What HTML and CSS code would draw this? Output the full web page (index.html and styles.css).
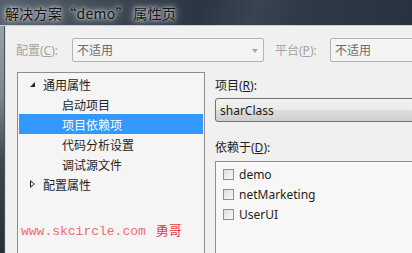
FILE: index.html
```html
<!DOCTYPE html>
<html lang="zh-CN">
<head>
    <meta charset="UTF-8">
    <title>解决方案“demo” 属性页</title>
    <link rel="stylesheet" href="styles.css">
</head>
<body>
    <div class="window">
        <div class="titlebar">
            <span class="title">解决方案“demo” 属性页</span>
        </div>
        <div class="frame">
            <div class="frame-edge"></div>
            <div class="dialog">
                <div class="config-row">
                    <span class="label disabled">配置(<u>C</u>):</span>
                    <div class="combo combo-disabled combo-config">
                        <span>不适用</span>
                        <span class="arrow"></span>
                    </div>
                    <span class="label disabled label-platform">平台(<u>P</u>):</span>
                    <div class="combo combo-disabled combo-platform">
                        <span>不适用</span>
                    </div>
                </div>
                <div class="main">
                    <div class="tree">
                        <div class="tree-item">
                            <span class="toggle expanded"></span>
                            <span>通用属性</span>
                        </div>
                        <div class="tree-item child">启动项目</div>
                        <div class="tree-item child selected">项目依赖项</div>
                        <div class="tree-item child">代码分析设置</div>
                        <div class="tree-item child">调试源文件</div>
                        <div class="tree-item">
                            <span class="toggle collapsed"></span>
                            <span>配置属性</span>
                        </div>
                        <div class="watermark">www.skcircle.com <span class="wm-name">勇哥</span></div>
                    </div>
                    <div class="panel">
                        <div class="field-label">项目(<u>R</u>):</div>
                        <div class="combo combo-project">sharClass</div>
                        <div class="field-label depends">依赖于(<u>D</u>):</div>
                        <div class="listbox">
                            <div class="check-row"><span class="checkbox"></span>demo</div>
                            <div class="check-row"><span class="checkbox"></span>netMarketing</div>
                            <div class="check-row"><span class="checkbox"></span>UserUI</div>
                        </div>
                    </div>
                </div>
            </div>
        </div>
    </div>
</body>
</html>
```

FILE: styles.css
```css
body {
    margin: 0;
    width: 412px;
    height: 253px;
    overflow: hidden;
    background-color: #2a3440;
    font-family: "Noto Sans", "Noto Sans CJK SC", sans-serif;
    font-size: 12px;
    color: #1e1e1e;
}
.window {
    display: flex;
    flex-direction: column;
    height: 253px;
}
.titlebar {
    height: 25px;
    flex-shrink: 0;
    display: flex;
    align-items: center;
    padding-left: 5px;
    background: linear-gradient(100deg, #56606b 0%, #3a4552 30%, #2b3643 48%, #3a4450 62%, #2f3a46 72%, #283340 100%);
    border-bottom: 1px solid #c9cfd5;
}
.title {
    font-family: "Noto Sans CJK SC", sans-serif;
    font-size: 14px;
    letter-spacing: 0.3px;
    color: #141414;
    text-shadow: 0 0 6px #c4c9ce, 0 0 10px #b8bec4, 0 0 3px #d0d4d8;
}
.frame {
    flex: 1;
    display: flex;
    min-height: 0;
}
.frame-edge {
    width: 4px;
    flex-shrink: 0;
    background: linear-gradient(180deg, #97a1ab 0%, #7b8691 30%, #3b4652 60%, #252e38 100%);
    border-right: 1px solid #4b5560;
}
.dialog {
    flex: 1;
    background-color: #f0f0f0;
    border-left: 1px solid #dcdcdc;
    padding: 12px 0 0 10px;
    overflow: hidden;
}
.config-row {
    display: flex;
    align-items: center;
    height: 24px;
    white-space: nowrap;
}
.label {
    width: 56px;
    flex-shrink: 0;
}
.label-platform {
    margin-left: 11px;
    width: 55px;
}
.disabled {
    color: #a3a3a3;
}
.combo {
    box-sizing: border-box;
    height: 24px;
    display: flex;
    align-items: center;
    padding-left: 4px;
    flex-shrink: 0;
    position: relative;
}
.combo-disabled {
    background-color: #f4f4f4;
    border: 1px solid #b4b4b4;
    border-radius: 2px;
    color: #6a6a6a;
}
.combo-config {
    width: 192px;
}
.combo-platform {
    width: 120px;
}
.arrow {
    position: absolute;
    right: 5px;
    top: 10px;
    border-left: 3px solid transparent;
    border-right: 3px solid transparent;
    border-top: 4px solid #a6a6a6;
}
.main {
    display: flex;
    margin-top: 10px;
    margin-left: 1px;
}
.tree {
    width: 184px;
    height: 200px;
    flex-shrink: 0;
    background-color: #f5f5f5;
    border: 1px solid #8e8e8e;
    padding: 1px 1px 0 1px;
    font-family: "Noto Sans CJK SC", sans-serif;
}
.tree-item {
    height: 20px;
    display: flex;
    align-items: center;
    padding-left: 24px;
    white-space: nowrap;
}
.tree-item.child {
    padding-left: 43px;
}
.tree-item.selected {
    background-color: #3399ff;
    color: #ffffff;
}
.toggle {
    width: 10px;
    height: 10px;
    margin-left: -14px;
    margin-right: 4px;
    position: relative;
}
.toggle.expanded::before {
    content: "";
    position: absolute;
    left: 1px;
    top: 3px;
    border-left: 5px solid transparent;
    border-bottom: 5px solid #262626;
}
.toggle.collapsed::before {
    content: "";
    position: absolute;
    left: 1px;
    top: 1px;
    border-top: 4px solid transparent;
    border-bottom: 4px solid transparent;
    border-left: 5px solid #262626;
}
.toggle.collapsed::after {
    content: "";
    position: absolute;
    left: 2px;
    top: 3px;
    border-top: 2px solid transparent;
    border-bottom: 2px solid transparent;
    border-left: 3px solid #f5f5f5;
}
.watermark {
    margin-top: 26px;
    padding-left: 2px;
    font-family: "Liberation Mono", monospace;
    font-size: 13px;
    color: #f06d6d;
    white-space: nowrap;
}
.wm-name {
    font-family: "Noto Sans CJK SC", sans-serif;
    font-size: 13px;
    color: #e83838;
    margin-left: 2px;
}
.panel {
    margin-left: 10px;
    width: 260px;
    flex-shrink: 0;
    display: flex;
    flex-direction: column;
}
.field-label {
    height: 20px;
    display: flex;
    align-items: center;
    margin-top: 3px;
}
.combo-project {
    margin-top: 3px;
    border: 1px solid #707070;
    border-radius: 3px;
    background: linear-gradient(180deg, #f2f2f2 0%, #ebebeb 50%, #dddddd 51%, #cfcfcf 100%);
    font-size: 12px;
    color: #1a1a1a;
}
.depends {
    margin-top: 15px;
}
.listbox {
    margin-top: 4px;
    height: 120px;
    background-color: #f7f7f7;
    border: 1px solid #8e8e8e;
    padding-top: 2px;
}
.check-row {
    height: 20px;
    display: flex;
    align-items: center;
    padding-left: 7px;
    font-size: 12px;
}
.checkbox {
    box-sizing: border-box;
    width: 11px;
    height: 11px;
    border: 1px solid #8f8f8f;
    background: linear-gradient(135deg, #dedede, #f8f8f8);
    margin-right: 5px;
}
```
